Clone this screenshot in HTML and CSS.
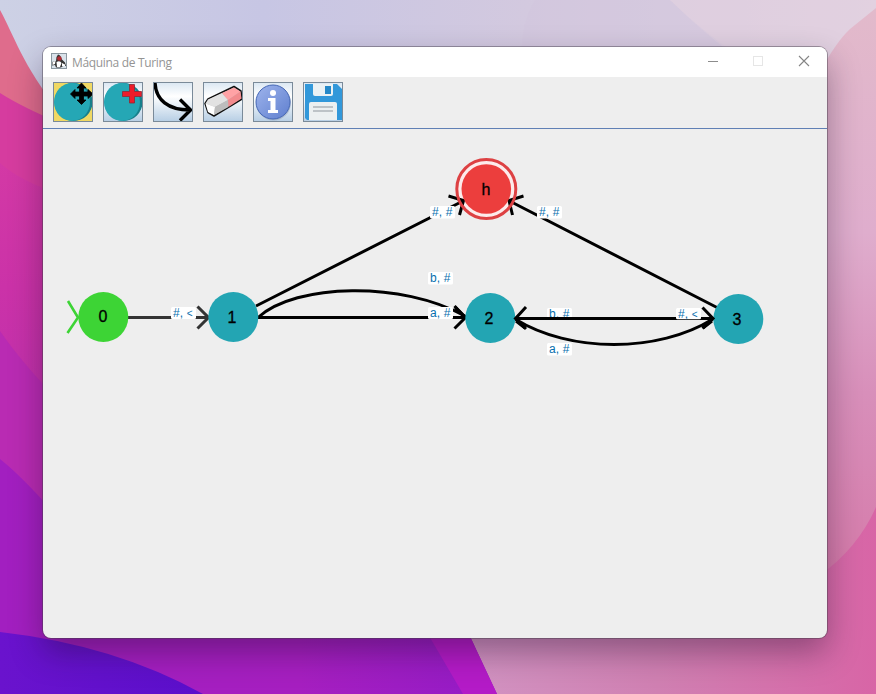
FILE: index.html
```
<!DOCTYPE html>
<html lang="es">
<head>
<meta charset="utf-8">
<title>Máquina de Turing</title>
<link rel="stylesheet" href="styles.css">
</head>
<body>
<svg class="wallpaper" viewBox="0 0 876 694" aria-hidden="true">
  <defs>
    <linearGradient id="sky" x1="0" x2="1"><stop offset="0" stop-color="#cdd1e5"/><stop offset=".3" stop-color="#c7c6e4"/><stop offset=".6" stop-color="#d3c9df"/><stop offset="1" stop-color="#e3d1e0"/></linearGradient>
    <linearGradient id="rose" x1="0" y1="0" x2="0" y2="1"><stop offset="0" stop-color="#e2bacb"/><stop offset=".38" stop-color="#dfadcd"/><stop offset=".65" stop-color="#d88fba"/><stop offset="1" stop-color="#d578a8"/></linearGradient>
    <linearGradient id="rose2" x1="0" x2="1"><stop offset="0" stop-color="#d296c4"/><stop offset=".5" stop-color="#d080b2"/><stop offset="1" stop-color="#d865a6"/></linearGradient>
    <linearGradient id="magenta" x1="0" y1="0" x2="0" y2="1"><stop offset="0" stop-color="#d339a5"/><stop offset=".5" stop-color="#cb32a8"/><stop offset="1" stop-color="#c030ac"/></linearGradient>
    <linearGradient id="violet" x1="0" x2="1"><stop offset="0" stop-color="#a21fc0"/><stop offset=".6" stop-color="#a61fc0"/><stop offset="1" stop-color="#941bc6"/></linearGradient>
    <linearGradient id="indigo" x1="0" x2="1"><stop offset="0" stop-color="#6a13cd"/><stop offset="1" stop-color="#5b0fcb"/></linearGradient>
  </defs>
  <rect width="876" height="694" fill="url(#sky)"/>
  <path d="M522 60Q520 25 535 0H670Q700 30 740 60Z" fill="#d2c6dd" opacity=".6"/>
  <path d="M670 0Q705 34 745 60H830L876 8V0Z" fill="#e1d0e0" opacity=".6"/>
  <path d="M876 8L850 29Q836 42 820 72V600H876Z" fill="url(#rose)"/>
  <path d="M876 507Q858 548 820 575L440 620V694H876Z" fill="url(#rose2)"/>
  <path d="M0 10C14 35 22 65 60 112V140H0Z" fill="#df6c8c"/>
  <path d="M0 93Q22 107 60 123V220H0Z" fill="#d63c9f"/>
  <path d="M0 163Q20 181 60 194V410H0Z" fill="url(#magenta)"/>
  <path d="M0 331Q22 363 60 402V520H0Z" fill="#b92bb3"/>
  <path d="M0 459Q25 479 60 520V600H453L497 694H0Z" fill="url(#violet)"/>
  <path d="M408 600H453L497 694H463Z" fill="#b41bc7"/>
  <path d="M0 632Q115 645 203 694H0Z" fill="url(#indigo)"/>
</svg>

<main class="window">
  <header class="titlebar">
    <svg class="app-icon" viewBox="0 0 16 16">
      <rect x=".5" y=".5" width="15" height="15" fill="#d9e2ea" stroke="#8b97a0"/>
      <path d="M7 1.500Q10 2 10.500 6L14 9.500 15 13H12L10 14.500H5L4 12 1 12.500V9L5 8 5.500 4Z" fill="#333"/>
      <path d="M5.500 9Q9 7 10.500 10L9 14H6Z" fill="#fff"/>
      <path d="M1.500 9L4.500 8 4 11 1.500 12ZM11 10L14 11.500V13H11Z" fill="#fff"/>
      <circle cx="8.400" cy="5.500" r="2.300" fill="#b02a33"/>
    </svg>
    <h1 class="title">Máquina de Turing</h1>
    <svg class="controls" viewBox="0 0 104 12" fill="none">
      <path d="M1 6.500H11" stroke="#8c8c8c"/>
      <rect x="46.500" y="1.500" width="9" height="9" stroke="#e6e6e6"/>
      <path d="M92 1L102 11M102 1L92 11" stroke="#858585" stroke-width="1.100"/>
    </svg>
  </header>

  <nav class="toolbar">
    <button class="tool tool-active" aria-label="Mover">
      <svg viewBox="0 0 38 38">
        <circle cx="19.500" cy="19" r="19" fill="#177f8b"/><ellipse cx="18" cy="19" rx="18" ry="19" fill="#25a7b5"/>
        <path d="M27.500 0L32 5H29.500V9H34V6.500L39 11 34 15.500V13H29.500V17H32L27.500 21.500 23 17H25.500V13H21V15.500L16.500 11 21 6.500V9H25.500V5H23Z" stroke="#000" stroke-width=".8"/>
      </svg>
    </button>
    <button class="tool" aria-label="Agregar estado">
      <svg viewBox="0 0 38 38">
        <circle cx="19.500" cy="19" r="19" fill="#177f8b"/><ellipse cx="18" cy="19" rx="18" ry="19" fill="#25a7b5"/>
        <path d="M25.500 1.500H30.500V8.500H37.500V13.500H30.500V20H25.500V13.500H18.500V8.500H25.500Z" fill="#ed1c2a" stroke="#8e2732" stroke-width=".8"/>
      </svg>
    </button>
    <button class="tool" aria-label="Agregar transición">
      <svg viewBox="0 0 38 38" fill="none" stroke="#000" stroke-width="3.400">
        <path d="M1 0C2 17 14 27 36 27M26 16.500L36.500 27 26 37.500"/>
      </svg>
    </button>
    <button class="tool" aria-label="Borrar">
      <svg viewBox="0 0 38 38">
        <path d="M1 20.500L4 16 30 3.500 37 8 38 16 10 33 4 29.500Z" fill="#b9b9b9" stroke="#111" stroke-width="1.500" stroke-linejoin="round"/>
        <path d="M1.500 20.500L4 16.500 18 10 24 17 11 24Z" fill="#e2e2e2"/><path d="M1.500 20.500L11 24 10 32 4 29Z" fill="#fff"/><path d="M11 24L24 17 24.500 24 10 32Z" fill="#bdbdbd"/>
        <path d="M18 10L30 4.500 36.500 8.500 24 17Z" fill="#ffa2a5"/><path d="M24 17L36.500 8.500 37.500 15.500 24.500 24Z" fill="#f28b8e"/>
      </svg>
    </button>
    <button class="tool" aria-label="Información">
      <svg viewBox="0 0 38 38">
        <defs><linearGradient id="info" x1="0" y1="0" x2="1" y2="1"><stop offset="0" stop-color="#9eb4ec"/><stop offset="1" stop-color="#5f7fcf"/></linearGradient></defs>
        <circle cx="19.500" cy="20" r="17.500" fill="#97a5bd" opacity=".6"/>
        <circle cx="19" cy="19" r="17" fill="url(#info)" stroke="#4668b6" stroke-width="1"/>
        <circle cx="19" cy="10" r="3" fill="#fff"/>
        <path d="M14 15H21.500V27H24V30H14V27H16.500V18H14Z" fill="#fff"/>
      </svg>
    </button>
    <button class="tool" aria-label="Guardar">
      <svg viewBox="0 0 38 38">
        <path d="M1 1H33L38 6V37H3L1 35Z" fill="#3298da"/>
        <path d="M9 1H29V11Q29 13 27 13H11Q9 13 9 11Z" fill="#eaf1f4"/><rect x="21" y="3" width="6" height="8" fill="#2488c8"/>
        <path d="M5 37V21Q5 19 7 19H31Q33 19 33 21V37Z" fill="#ecf0f1"/>
        <path d="M9 24H29M9 28H29" stroke="#bdc3c7" stroke-width="1.800"/>
      </svg>
    </button>
  </nav>

  <!-- Graph coordinates start at the window's screen position. -->
  <svg class="graph" viewBox="43 129 784 509">
    <circle class="halo" cx="486.300" cy="189" r="29.500"/>
    <g class="start"><path d="M68 301L78 317.500 67.500 333"/></g>
    <g class="edge edge-dim"><path d="M128 317.500H208M197.500 306.500L208.500 317.500 197.500 328.500"/></g>
    <g class="edge">
      <path d="M256 306L463 201M448.500 196L463.500 200.500 459.500 215"/>
      <path d="M717 307.500L509.500 201M523.500 196L509 200.500 512.500 215"/>
      <path d="M258 317.500H465M454.500 306L465.500 317.500 454.500 328.500"/>
      <path d="M258 317.500C296 283 402 281 465 316M455 307L465 317M455 310L464 316"/>
      <path d="M515 319C570 353 658 353 713 319M516 321L525 328M712 321L703 328"/>
    </g>

    <g class="node node-final">
      <circle class="ring" cx="486.300" cy="189" r="29.500"/>
      <circle cx="486.300" cy="189" r="24.800"/>
      <text x="486" y="195">h</text>
    </g>
    <g class="node node-start"><circle cx="103.300" cy="317" r="25"/><text x="103" y="322">0</text></g>
    <g class="node"><circle cx="233.300" cy="317" r="25"/><text x="232" y="323">1</text></g>
    <g class="node"><circle cx="490.300" cy="318" r="25"/><text x="489" y="324">2</text></g>
    <g class="node"><circle cx="738.300" cy="319" r="25"/><text x="737" y="325">3</text></g>

    <g class="label">
      <rect x="171" y="307" width="25" height="12" rx="1.500"/><text x="173" y="317">#, <tspan class="move">&lt;</tspan></text>
      <rect x="430" y="206" width="25" height="12.500" rx="1.500"/><text x="432" y="216">#, #</text>
      <rect x="537" y="206" width="25" height="12.500" rx="1.500"/><text x="539" y="216">#, #</text>
      <rect x="428" y="272" width="25" height="12.500" rx="1.500"/><text x="430" y="282">b, #</text>
      <rect x="428" y="307" width="25" height="12" rx="1.500"/><text x="430" y="317">a, #</text>
      <rect x="547" y="308" width="25" height="12" rx="1.500"/><text x="549" y="318">b, #</text>
      <rect x="547" y="343" width="25" height="12.500" rx="1.500"/><text x="549" y="353">a, #</text>
    </g>
    <g class="edge"><path d="M515 318.500H713M526 307L515.500 318.500 526 329M702.500 307.500L713 318.500 702.500 328.500"/></g>
    <g class="label"><rect x="676" y="308" width="25" height="11.300" rx="1.500"/><text x="678" y="318">#, <tspan class="move">&lt;</tspan></text></g>
  </svg>
</main>
</body>
</html>
```
FILE: styles.css
```
* { box-sizing: border-box; }

body {
  margin: 0;
  height: 694px;
  padding: 47px 49px 56px 43px;
  overflow: hidden;
  font-family: "Open Sans", "Noto Sans", sans-serif;
}

.wallpaper {
  position: absolute;
  inset: 0;
  z-index: -1;
  width: 876px;
  height: 694px;
}

.window {
  display: flex;
  flex-direction: column;
  height: 591px;
  overflow: hidden;
  border-radius: 8px;
  background: #eee;
  box-shadow: 0 0 0 1px rgba(70, 65, 75, .45), 0 14px 32px rgba(30, 10, 40, .38);
}

.titlebar {
  display: flex;
  align-items: center;
  flex: 0 0 30px;
  padding: 0 16px 0 8px;
  background: #fff;
}

.app-icon { width: 16px; height: 16px; margin-top: -2px; }

.title {
  flex: 1;
  margin: 0 0 0 5px;
  color: #949494;
  font-size: 12px;
  font-weight: 400;
  letter-spacing: -.33px;
}

.controls { width: 104px; height: 12px; margin-top: -2px; }

.toolbar {
  display: flex;
  flex: 0 0 52px;
  gap: 10px;
  padding: 5px 10px;
  border-bottom: 1px solid #6080b5;
}

.tool {
  width: 40px;
  height: 40px;
  padding: 0;
  border: 1px solid #7a8a99;
  background: linear-gradient(#dce8f3, #fff 35%, #b8cfe5);
}

.tool-active { background: #f0d863; }

.tool svg { display: block; width: 38px; height: 38px; }

.graph { flex: 0 0 509px; width: 784px; }

.edge, .start { fill: none; stroke: #000; stroke-width: 3; }
.edge-dim { stroke: #333; }
.start { stroke: #3dd435; stroke-width: 2.6; }

.halo { fill: #fdebeb; }
.node circle { fill: #23a5b3; }
.node-start circle { fill: #3dd435; }
.node-final circle { fill: #ec3e3d; }
.node-final .ring { fill: none; stroke: #dd4143; stroke-width: 3; }

.node text {
  fill: #000;
  stroke: #000;
  stroke-width: .3px;
  font: 16px "Liberation Sans", sans-serif;
  text-anchor: middle;
}

.label rect { fill: #fff; }
.label text { fill: #0870ae; font: 12px "Liberation Sans", sans-serif; letter-spacing: .1px; }
.label .move { font-size: 10px; }
```
